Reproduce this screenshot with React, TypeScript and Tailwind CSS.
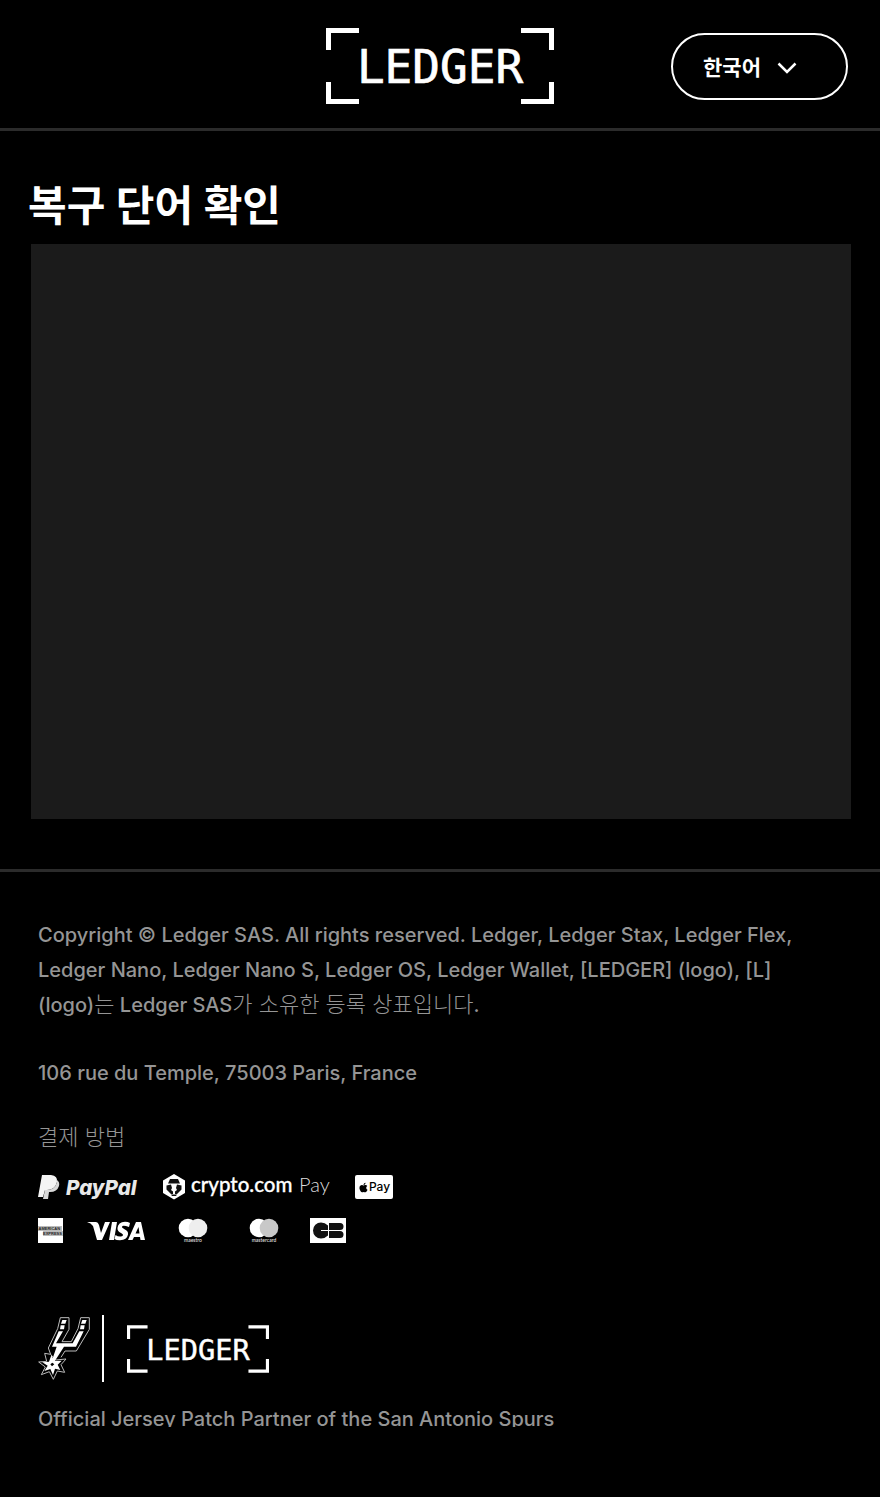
import React from "react";
import { FaApple } from "react-icons/fa";

function LedgerLogo({ className }: { className: string }) {
  return (
    <svg viewBox="0 0 228 76" className={className} role="img" aria-label="Ledger">
      <g fill="#fff">
        <path d="M0 0H33V5H5V22H0Z" />
        <path d="M228 0H195V5H223V22H228Z" />
        <path d="M0 76H33V71H5V54H0Z" />
        <path d="M228 76H195V71H223V54H228Z" />
      </g>
      <text
        x="114"
        y="55"
        textAnchor="middle"
        fill="#fff"
        stroke="#fff"
        strokeWidth="0.7"
        fontSize="46"
        fontFamily="'DejaVu Sans Mono', monospace"
      >
        LEDGER
      </text>
    </svg>
  );
}

function PayPal() {
  return (
    <svg viewBox="0 0 101 26" className="h-[26px] w-[101px]" role="img" aria-label="PayPal">
      <path d="M4 1H13Q20 2 19 8Q17 16 9 16H7L5 23H0Z" fill="#f4f4f4" />
      <path d="M19 6Q22 8 21 12Q19 18 12 18H11L10 25H5L7 16H9Q17 16 19 8Z" fill="#d8d8d8" />
      <text x="28" y="21" fill="#e8e8e8" fontSize="20.500" fontWeight="800" fontStyle="italic" fontFamily="Inter, sans-serif">
        PayPal
      </text>
    </svg>
  );
}

function CryptoPay() {
  return (
    <svg viewBox="0 0 168 26" className="h-[26px] w-[168px] overflow-visible" role="img" aria-label="crypto.com Pay">
      <path d="M11 0L22 6.500V19L11 25.500L0 19V6.500Z" fill="#fff" />
      <path d="M7 5H15L17 9.500H5Z" fill="#111" />
      <path d="M3.500 11.500L8 10.500L9 14L8 16L10 17.500V20H8L3.500 15.500Z" fill="#111" />
      <path d="M18.500 11.500L14 10.500L13 14L14 16L12 17.500V20H14L18.500 15.500Z" fill="#111" />
      <path d="M8 20.500H14L13 22H9Z" fill="#111" />
      <text x="28" y="18" fill="#fff" stroke="#fff" strokeWidth="0.3" fontSize="20.500" fontWeight="500" fontFamily="Lato, sans-serif">
        crypto.com
      </text>
      <text x="136" y="18" fill="#ddd" fontSize="20" fontWeight="300" fontFamily="Lato, sans-serif">
        Pay
      </text>
    </svg>
  );
}

function ApplePay() {
  return (
    <span className="flex h-[24px] w-[38px] items-center justify-center rounded-[2px] bg-white text-black">
      <FaApple className="size-[11px]" aria-hidden="true" />
      <span className="font-['Inter',sans-serif] text-[12px] font-medium leading-none">Pay</span>
    </span>
  );
}

function Amex() {
  return (
    <svg viewBox="0 0 25 25" className="size-[25px]" role="img" aria-label="American Express">
      <path d="M0 0H25V25H0Z" fill="#fff" />
      <path d="M0 8H24V13H0ZM5 13H25V18H5Z" fill="#bbb" />
      <g fill="#222" fontWeight="700" fontFamily="'Liberation Sans', sans-serif">
        <text x="0.500" y="12" fontSize="4">AMERICAN</text>
        <text x="5" y="17" fontSize="4">EXPRESS</text>
      </g>
    </svg>
  );
}

function Visa() {
  return (
    <svg viewBox="0 0 59 20" className="h-[20px] w-[59px]" role="img" aria-label="Visa">
      <path d="M0 1H9Q11 1 12 4L14 12L18 1H23L15 19H10L6 5Q4 2 0 1Z" fill="#fff" />
      <path d="M25 1H30L27 19H22Z" fill="#fff" />
      <path d="M43 2L42 6Q35 3.500 35 6C35 8 42 8.500 41 13.500Q40 19 33 19.300Q29 19.300 27.500 18L28.500 14Q31 15.800 34 15.500Q36 15.300 36 14C36 12 30 11.500 30.500 7Q31 1 38 .7Q41 .7 43 2Z" fill="#fff" />
      <path d="M49 1H54L58 19H53.500L53 16H47L45.500 19H41ZM51.500 6L48.500 12.500H52.500Z" fill="#fff" fillRule="evenodd" />
    </svg>
  );
}

function Circles({ name, tone }: { name: string; tone: string }) {
  return (
    <svg viewBox="0 0 30 25" className="h-[25px] w-[30px]" role="img" aria-label={name}>
      <circle cx="10" cy="10" r="9.300" fill="#fff" />
      <circle cx="20" cy="10" r="9.300" fill={tone} />
      <text x="15" y="23.500" textAnchor="middle" fill="#ddd" fontSize="5" fontWeight="600" fontFamily="Lato, sans-serif">
        {name}
      </text>
    </svg>
  );
}

function CarteBancaire() {
  return (
    <svg viewBox="0 0 36 25" className="h-[25px] w-[36px]" role="img" aria-label="CB">
      <path d="M0 0H36V25H0Z" fill="#fff" />
      <path d="M18 12V7.500Q15 4.500 11 4.500A8 8 0 0 0 11 20.500Q15 20.500 18 17.500V13H11V12Z" fill="#111" />
      <path d="M19 5H30Q33.500 5 33.500 8.500T30 12H19ZM19 13H30Q33.500 13 33.500 16.500T30 20H19Z" fill="#111" />
    </svg>
  );
}

function Spurs() {
  return (
    <svg viewBox="24 9 168 201" className="h-[67px] w-[56px]" role="img" aria-label="San Antonio Spurs">
      <g fill="none" stroke="#bbb" strokeWidth="3">
        <path d="M62 127L55 108L83 50L91 17H117V52L96 89H124L144 50L152 17H178V52L139 117H105L93 136" />
        <path d="M62 127L76 144L108 141L93 158L104 181L82 177L70 202L58 179L34 188L46 165L26 150L50 148L44 124Z" />
      </g>
      <g fill="#fff">
        <path d="M97 24H110L106 35H93ZM92 40H104L102 52H90Z" />
        <path d="M157 24H170L166 35H153ZM152 40H164L162 52H150Z" />
        <path d="M86 58H99L78 94H128L148 58H161L138 104H102L74 148L66 145L80 104H66Z" />
        <path fillRule="evenodd" d="M64 130L73 147L95 146L83 158L91 174L75 170L69 189L61 171L43 177L53 161L37 151L57 149ZM67 152L61 157L66 163L73 157Z" />
      </g>
    </svg>
  );
}

export default function App() {
  return (
    <div className="min-h-screen bg-black font-['Inter','Noto_Sans_CJK_KR',sans-serif] text-white">
      <header className="grid grid-cols-[1fr_auto_1fr] items-center border-b-[3px] border-[#2b2b2b] px-8 pt-7 pb-6">
        <a href="#" className="col-start-2">
          <LedgerLogo className="h-[76px] w-[228px]" />
        </a>
        <button
          type="button"
          aria-haspopup="listbox"
          className="flex h-[67px] w-[177px] items-center gap-4 justify-self-end rounded-full border-2 border-white pt-1 pl-[30px] text-[21px] font-bold"
        >
          한국어
          <svg viewBox="0 0 20 12" className="h-[12px] w-[20px]" aria-hidden="true">
            <path d="M1.500 1.500L10 10L18.500 1.500" fill="none" stroke="#fff" strokeWidth="2.500" />
          </svg>
        </button>
      </header>

      <main className="pt-10 pr-[29px] pb-[50px] pl-[31px]">
        <h1 className="-ml-[3px] mb-[3px] text-[42px] font-semibold leading-[70px]">복구 단어 확인</h1>
        <section aria-label="복구 단어 확인" className="h-[575px] bg-[#1b1b1b]" />
      </main>

      <footer className="border-t-[3px] border-[#2b2b2b] px-[38px] pt-[46px] pb-[70px] text-[20px] font-medium leading-[35px] text-[#959595]">
        <p>
          Copyright © Ledger SAS. All rights reserved. Ledger, Ledger Stax, Ledger Flex, Ledger Nano, Ledger Nano S,
          Ledger OS, Ledger Wallet, [LEDGER] (logo), [L]{" "}
          <span className="whitespace-nowrap">
            (logo)<span className="text-[22px] font-light leading-none">는</span>
          </span>{" "}
          Ledger SAS
          <span className="text-[22px] font-light leading-none">가 소유한 등록 상표입니다</span>.
        </p>
        <p className="mt-[33px]">106 rue du Temple, 75003 Paris, France</p>
        <h2 className="mt-[29px] text-[22px] font-light">결제 방법</h2>
        <div className="mt-[19px] flex items-center gap-6">
          <PayPal />
          <CryptoPay />
          <ApplePay />
        </div>
        <div className="mt-[18px] flex items-center">
          <Amex />
          <div className="ml-6 flex items-center gap-8">
            <Visa />
            <Circles name="maestro" tone="#eeeeee" />
          </div>
          <div className="ml-[41px] flex items-center gap-[31px]">
            <Circles name="mastercard" tone="#c8c8c8" />
            <CarteBancaire />
          </div>
        </div>
        <div className="mt-[72px] flex items-center">
          <Spurs />
          <span className="ml-2 h-[67px] w-[2px] bg-white" />
          <LedgerLogo className="ml-[23px] h-[48px] w-[142px]" />
        </div>
        <p className="mt-5 h-[25px] overflow-hidden">Official Jersey Patch Partner of the San Antonio Spurs</p>
      </footer>
    </div>
  );
}
